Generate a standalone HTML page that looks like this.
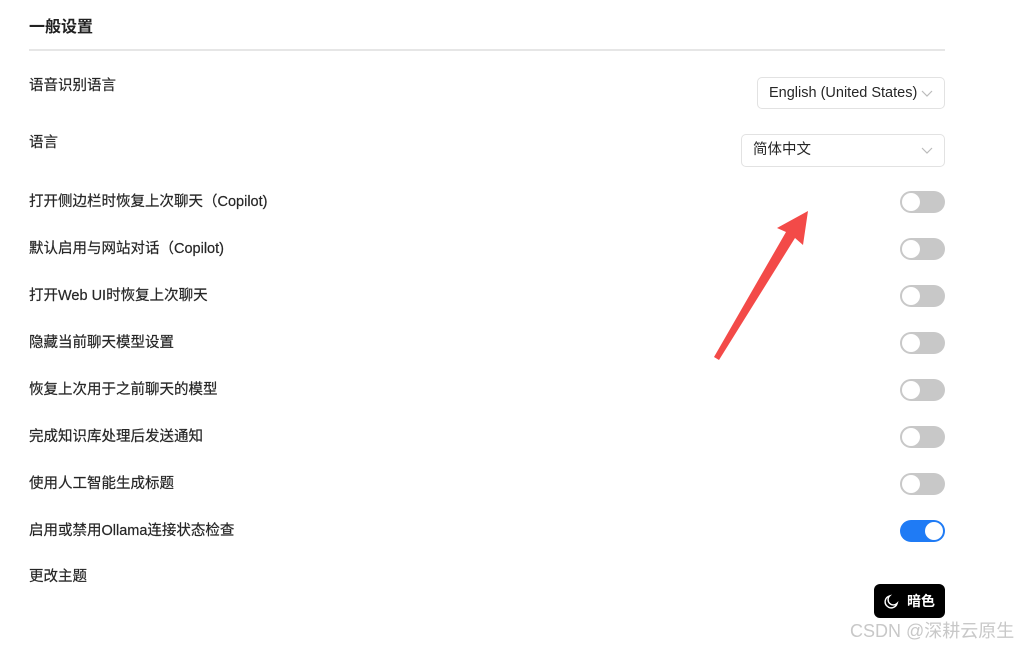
<!DOCTYPE html>
<html><head><meta charset="utf-8"><style>
body{margin:0;width:1024px;height:645px;background:#fff;font-family:"Liberation Sans","Noto Sans CJK SC",sans-serif;position:relative;overflow:hidden;color:#333}
.a{position:absolute}
.lbl{position:absolute;left:29px;font-size:14.5px;line-height:20px;color:#262626;-webkit-text-stroke:0.2px #262626}
.tg{position:absolute;left:900px;width:45px;height:22px;border-radius:11px;background:#c8c8c8}
.tg::after{content:"";position:absolute;left:2px;top:2px;width:18px;height:18px;border-radius:50%;background:#fff}
.tg.on{background:#1f7bf5}.tg.on::after{left:25px}
.sel{position:absolute;border:1px solid #e2e2e2;border-radius:5px;font-size:14.5px;color:#262626;box-sizing:border-box;line-height:30px;padding-left:11px}
.chev{position:absolute;right:11px;top:9px}
</style></head><body>
<div class="a" style="left:29px;top:13px;font-size:16px;font-weight:bold;color:#222">一般设置</div>
<div class="a" style="left:29px;top:49px;width:916px;height:2px;background:#e6e6e6"></div>
<div class="lbl" style="top:76px">语音识别语言</div>
<div class="sel" style="left:757px;top:77px;width:188px;height:32px">English (United States)<svg class="chev" width="12" height="12" viewBox="0 0 12 12"><path d="M1 4l5 5 5-5" fill="none" stroke="#bbb" stroke-width="1.2"/></svg></div>
<div class="lbl" style="top:133px">语言</div>
<div class="sel" style="left:741px;top:134px;width:204px;height:33px">简体中文<svg class="chev" width="12" height="12" viewBox="0 0 12 12"><path d="M1 4l5 5 5-5" fill="none" stroke="#bbb" stroke-width="1.2"/></svg></div>
<div class="lbl" style="top:192px">打开侧边栏时恢复上次聊天（Copilot)</div><div class="tg" style="top:191px"></div>
<div class="lbl" style="top:239px">默认启用与网站对话（Copilot)</div><div class="tg" style="top:238px"></div>
<div class="lbl" style="top:286px">打开Web UI时恢复上次聊天</div><div class="tg" style="top:285px"></div>
<div class="lbl" style="top:333px">隐藏当前聊天模型设置</div><div class="tg" style="top:332px"></div>
<div class="lbl" style="top:380px">恢复上次用于之前聊天的模型</div><div class="tg" style="top:379px"></div>
<div class="lbl" style="top:427px">完成知识库处理后发送通知</div><div class="tg" style="top:426px"></div>
<div class="lbl" style="top:474px">使用人工智能生成标题</div><div class="tg" style="top:473px"></div>
<div class="lbl" style="top:521px">启用或禁用Ollama连接状态检查</div><div class="tg on" style="top:520px"></div>
<div class="lbl" style="top:567px">更改主题</div>
<div class="a" style="left:874px;top:584px;width:71px;height:34px;background:#000;border-radius:6px;color:#fff;font-size:14px;font-weight:bold;line-height:34px">
<svg class="a" style="left:10px;top:10px" width="15" height="15" viewBox="0 0 16 16"><path d="M6 2A6.5 6.5 0 1 0 14 10 5 5 0 0 1 6 2z" fill="none" stroke="#fff" stroke-width="1.5"/></svg>
<span class="a" style="left:33px;top:0">暗色</span></div>
<svg class="a" style="left:0;top:0" width="1024" height="645"><polygon points="714,357 786,232 777,228 808,211 803,245 795,238 719,360" fill="#f34a48"/></svg>
<div class="a" style="left:850px;top:617px;font-size:18px;color:#c8c8c8">CSDN @深耕云原生</div>
</body></html>
